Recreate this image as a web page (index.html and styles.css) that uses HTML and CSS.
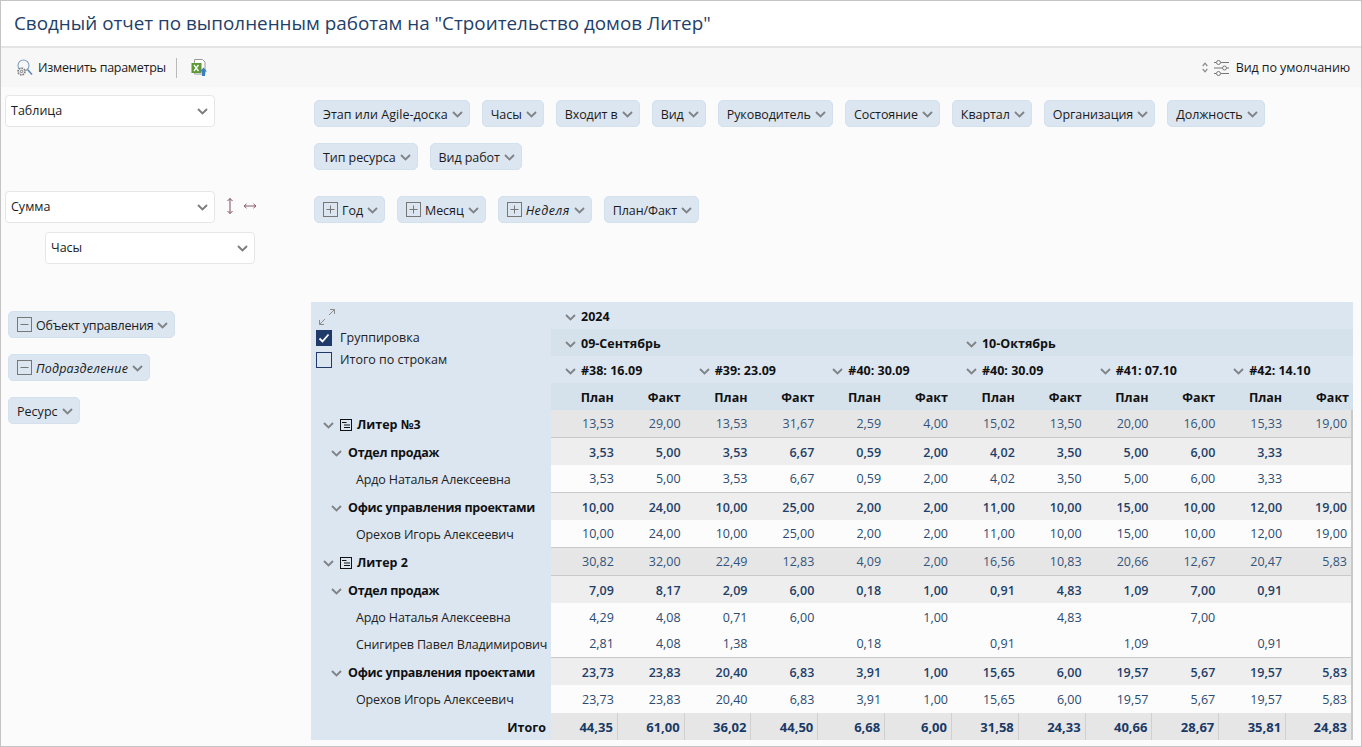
FILE: index.html
```html
<!DOCTYPE html>
<html lang="ru">
<head>
<meta charset="utf-8">
<title>Сводный отчет</title>
<link rel="stylesheet" href="styles.css">
</head>
<body>
<svg class="defs" width="0" height="0"><defs>
<symbol id="chev" viewBox="0 0 11 7"><path d="M1 1l4.500 4.500L10 1" fill="none" stroke="currentColor" stroke-width="1.900"/></symbol>
<symbol id="minus" viewBox="0 0 15 15"><rect x="0.500" y="0.500" width="14" height="14" fill="none" stroke="#777"/><path d="M3.500 7.500h8" stroke="#777"/></symbol>
<symbol id="plus" viewBox="0 0 15 15"><rect x="0.500" y="0.500" width="14" height="14" fill="none" stroke="#777"/><path d="M3.500 7.500h8M7.500 3.500v8" stroke="#777"/></symbol>
<symbol id="tree" viewBox="0 0 12 12"><g fill="none" stroke="#111"><rect x="0.500" y="0.500" width="11" height="11"/><path d="M2 3.500h4.500M4 6h6M4 8.500h6"/></g></symbol>
</defs></svg>
<div class="frame">
<header class="title"><h1>Сводный отчет по выполненным работам на "Строительство домов Литер"</h1></header>
<div class="toolbar">
  <button class="tool">
    <svg class="ico" width="18" height="18" viewBox="0 0 18 18"><circle cx="8.500" cy="6.500" r="5.500" fill="none" stroke="#7d9cc0" stroke-width="1.100"/><path d="M12.500 10.500l4.500 5" stroke="#5b86b8" stroke-width="1.500"/><circle cx="6.500" cy="12.500" r="3.400" fill="#f7f7f7" stroke="#777" stroke-width="1.700" stroke-dasharray="1.600 1"/><circle cx="6.500" cy="12.500" r="1.200" fill="none" stroke="#777"/></svg>
    <span>Изменить параметры</span>
  </button>
  <span class="sep"></span>
  <svg class="xl" width="18" height="19" viewBox="0 0 18 19"><path d="M4.500 1.500h8l2.500 2.500v12h-10.500z" fill="#fff" stroke="#999"/><rect x="1.500" y="5" width="10" height="10" fill="#5d9a35"/><path d="M4 7l4.500 6M8.500 7L4 13" stroke="#fff" stroke-width="1.300"/><path d="M13.500 9.500l3.500 4h-2v4.500h-3v-4.500h-2z" fill="#3c7fc0"/></svg>
  <div class="view">
    <svg width="6" height="11" viewBox="0 0 6 11"><path d="M.7 4L3 1.200 5.300 4M.7 7L3 9.800 5.300 7" fill="none" stroke="#888" stroke-width="1.200"/></svg>
    <svg width="15" height="16" viewBox="0 0 15 16" fill="none" stroke="#777"><path d="M0 2.500h2M7 2.500h8M0 8h8M13 8h2M0 13.500h2M7 13.500h8"/><circle cx="4.500" cy="2.500" r="2"/><circle cx="10.500" cy="8" r="2"/><circle cx="4.500" cy="13.500" r="2"/></svg>
    <span>Вид по умолчанию</span>
  </div>
</div>
<div class="main">
  <aside class="side">
    <div class="select first"><span>Таблица</span><svg class="chev sel"><use href="#chev"/></svg></div>
    <div class="sum-row">
      <div class="select"><span>Сумма</span><svg class="chev sel"><use href="#chev"/></svg></div>
      <svg class="swap" width="34" height="18" viewBox="0 0 34 18" fill="none" stroke="#7a4a63"><path d="M6 1.500v15M3.500 4L6 1.500 8.500 4M3.500 14L6 16.500 8.500 14"/><path d="M20 9h12M22.500 6.800L20 9l2.500 2.200M29.500 6.800L32 9l-2.500 2.200" stroke="#8a5a6a"/></svg>
    </div>
    <div class="select indent"><span>Часы</span><svg class="chev sel"><use href="#chev"/></svg></div>
    <div class="rows">
      <div class="pill tight"><svg class="box"><use href="#minus"/></svg>Объект управления<svg class="chev"><use href="#chev"/></svg></div>
      <div class="pill"><svg class="box"><use href="#minus"/></svg><em>Подразделение</em><svg class="chev"><use href="#chev"/></svg></div>
      <div class="pill wide">Ресурс<svg class="chev"><use href="#chev"/></svg></div>
    </div>
  </aside>
  <section class="content">
    <div class="pills">
      <div class="pill wide">Этап или Agile-доска<svg class="chev"><use href="#chev"/></svg></div>
      <div class="pill">Часы<svg class="chev"><use href="#chev"/></svg></div>
      <div class="pill">Входит в<svg class="chev"><use href="#chev"/></svg></div>
      <div class="pill">Вид<svg class="chev"><use href="#chev"/></svg></div>
      <div class="pill">Руководитель<svg class="chev"><use href="#chev"/></svg></div>
      <div class="pill">Состояние<svg class="chev"><use href="#chev"/></svg></div>
      <div class="pill">Квартал<svg class="chev"><use href="#chev"/></svg></div>
      <div class="pill">Организация<svg class="chev"><use href="#chev"/></svg></div>
      <div class="pill">Должность<svg class="chev"><use href="#chev"/></svg></div>
      <div class="pill">Тип ресурса<svg class="chev"><use href="#chev"/></svg></div>
      <div class="pill">Вид работ<svg class="chev"><use href="#chev"/></svg></div>
    </div>
    <div class="pills cols">
      <div class="pill"><svg class="box"><use href="#plus"/></svg>Год<svg class="chev"><use href="#chev"/></svg></div>
      <div class="pill"><svg class="box"><use href="#plus"/></svg>Месяц<svg class="chev"><use href="#chev"/></svg></div>
      <div class="pill"><svg class="box"><use href="#plus"/></svg><em>Неделя</em><svg class="chev"><use href="#chev"/></svg></div>
      <div class="pill">План/Факт<svg class="chev"><use href="#chev"/></svg></div>
    </div>
    <table class="pivot">
      <colgroup><col class="c0"><col span="12"></colgroup>
      <thead>
        <tr>
          <th class="corner" rowspan="4">
            <svg class="expand" width="18" height="18" viewBox="0 0 18 18" fill="none" stroke="#8a8a8a"><path d="M1.500 16.500L7 11M11 7l5.500-5.500M12 1.500h4.500V6M1.500 12v4.500H6"/></svg>
            <label class="chk"><span class="cb on"><svg width="12" height="12" viewBox="0 0 12 12"><path d="M1.500 6.500l3 3 6-7" fill="none" stroke="#fff" stroke-width="1.800"/></svg></span><span class="lbl">Группировка</span></label>
            <label class="chk"><span class="cb"></span><span class="lbl">Итого по строкам</span></label>
          </th>
          <th class="hd" colspan="12"><svg class="chev"><use href="#chev"/></svg>2024</th>
        </tr>
        <tr class="month">
          <th class="hd" colspan="6"><svg class="chev"><use href="#chev"/></svg>09-Сентябрь</th>
          <th class="hd" colspan="6"><svg class="chev"><use href="#chev"/></svg>10-Октябрь</th>
        </tr>
        <tr>
          <th class="hd" colspan="2"><svg class="chev"><use href="#chev"/></svg>#38: 16.09</th>
          <th class="hd" colspan="2"><svg class="chev"><use href="#chev"/></svg>#39: 23.09</th>
          <th class="hd" colspan="2"><svg class="chev"><use href="#chev"/></svg>#40: 30.09</th>
          <th class="hd" colspan="2"><svg class="chev"><use href="#chev"/></svg>#40: 30.09</th>
          <th class="hd" colspan="2"><svg class="chev"><use href="#chev"/></svg>#41: 07.10</th>
          <th class="hd" colspan="2"><svg class="chev"><use href="#chev"/></svg>#42: 14.10</th>
        </tr>
        <tr class="pf">
          <th>План</th><th>Факт</th><th>План</th><th>Факт</th><th>План</th><th>Факт</th><th>План</th><th>Факт</th><th>План</th><th>Факт</th><th>План</th><th>Факт</th>
        </tr>
      </thead>
      <tbody>
        <tr class="l1 tall"><th><svg class="chev"><use href="#chev"/></svg><svg class="tree"><use href="#tree"/></svg>Литер №3</th><td>13,53</td><td>29,00</td><td>13,53</td><td>31,67</td><td>2,59</td><td>4,00</td><td>15,02</td><td>13,50</td><td>20,00</td><td>16,00</td><td>15,33</td><td>19,00</td></tr>
        <tr class="l2"><th><svg class="chev"><use href="#chev"/></svg>Отдел продаж</th><td>3,53</td><td>5,00</td><td>3,53</td><td>6,67</td><td>0,59</td><td>2,00</td><td>4,02</td><td>3,50</td><td>5,00</td><td>6,00</td><td>3,33</td><td></td></tr>
        <tr class="l3 tall"><th>Ардо Наталья Алексеевна</th><td>3,53</td><td>5,00</td><td>3,53</td><td>6,67</td><td>0,59</td><td>2,00</td><td>4,02</td><td>3,50</td><td>5,00</td><td>6,00</td><td>3,33</td><td></td></tr>
        <tr class="l2"><th><svg class="chev"><use href="#chev"/></svg>Офис управления проектами</th><td>10,00</td><td>24,00</td><td>10,00</td><td>25,00</td><td>2,00</td><td>2,00</td><td>11,00</td><td>10,00</td><td>15,00</td><td>10,00</td><td>12,00</td><td>19,00</td></tr>
        <tr class="l3 tall"><th>Орехов Игорь Алексеевич</th><td>10,00</td><td>24,00</td><td>10,00</td><td>25,00</td><td>2,00</td><td>2,00</td><td>11,00</td><td>10,00</td><td>15,00</td><td>10,00</td><td>12,00</td><td>19,00</td></tr>
        <tr class="l1 tall"><th><svg class="chev"><use href="#chev"/></svg><svg class="tree"><use href="#tree"/></svg>Литер 2</th><td>30,82</td><td>32,00</td><td>22,49</td><td>12,83</td><td>4,09</td><td>2,00</td><td>16,56</td><td>10,83</td><td>20,66</td><td>12,67</td><td>20,47</td><td>5,83</td></tr>
        <tr class="l2"><th><svg class="chev"><use href="#chev"/></svg>Отдел продаж</th><td>7,09</td><td>8,17</td><td>2,09</td><td>6,00</td><td>0,18</td><td>1,00</td><td>0,91</td><td>4,83</td><td>1,09</td><td>7,00</td><td>0,91</td><td></td></tr>
        <tr class="l3"><th>Ардо Наталья Алексеевна</th><td>4,29</td><td>4,08</td><td>0,71</td><td>6,00</td><td></td><td>1,00</td><td></td><td>4,83</td><td></td><td>7,00</td><td></td><td></td></tr>
        <tr class="l3 tall"><th>Снигирев Павел Владимирович</th><td>2,81</td><td>4,08</td><td>1,38</td><td></td><td>0,18</td><td></td><td>0,91</td><td></td><td>1,09</td><td></td><td>0,91</td><td></td></tr>
        <tr class="l2"><th><svg class="chev"><use href="#chev"/></svg>Офис управления проектами</th><td>23,73</td><td>23,83</td><td>20,40</td><td>6,83</td><td>3,91</td><td>1,00</td><td>15,65</td><td>6,00</td><td>19,57</td><td>5,67</td><td>19,57</td><td>5,83</td></tr>
        <tr class="l3 tall last"><th>Орехов Игорь Алексеевич</th><td>23,73</td><td>23,83</td><td>20,40</td><td>6,83</td><td>3,91</td><td>1,00</td><td>15,65</td><td>6,00</td><td>19,57</td><td>5,67</td><td>19,57</td><td>5,83</td></tr>
        <tr class="total"><th>Итого</th><td>44,35</td><td>61,00</td><td>36,02</td><td>44,50</td><td>6,68</td><td>6,00</td><td>31,58</td><td>24,33</td><td>40,66</td><td>28,67</td><td>35,81</td><td>24,83</td></tr>
      </tbody>
    </table>
  </section>
</div>
</div>
</body>
</html>
```

FILE: styles.css
```css
* { box-sizing: border-box; }
html, body { margin: 0; height: 747px; overflow: hidden; }
body { font-family: "Open Sans", "Noto Sans", sans-serif; font-size: 12.5px; color: #1b1b1b; background: #fafafa; }
.defs { position: absolute; }
.frame { height: 747px; border: 1px solid #c4c4c4; background: #fbfbfb; overflow: hidden; }

.title { height: 47px; background: #fff; border-bottom: 2px solid #e4e4e4; padding: 9px 13px 0; }
.title h1 { margin: 0; font-size: 18.85px; font-weight: 400; color: #1f4068; line-height: 26px; white-space: nowrap; }

.toolbar { height: 39px; background: #f7f7f7; display: flex; align-items: center; padding: 0 11px 0 14px; }
.tool { display: flex; align-items: center; gap: 5px; border: 0; background: none; padding: 0; font: inherit; color: inherit; letter-spacing: -0.27px; }
.sep { width: 1px; height: 20px; background: #bbb; margin: 0 13px 0 10px; }
.view { margin-left: auto; display: flex; align-items: center; gap: 6px; letter-spacing: -0.1px; }
.view span { margin-left: 1px; }

.main { display: flex; }
.side { width: 310px; flex: none; padding: 8px 0 0 4px; }
.select { width: 210px; height: 32px; background: #fff; border: 1px solid #e6e6e6; border-radius: 4px; display: flex; align-items: center; justify-content: space-between; padding: 0 5px 2px; }
.sum-row { display: flex; align-items: center; margin-top: 64px; gap: 9px; }
.swap { margin-top: -3px; }
.indent { margin: 9px 0 0 40px; }
.rows { margin-top: 47px; padding-left: 3px; display: flex; flex-direction: column; align-items: flex-start; gap: 16px; }

.chev { width: 11px; height: 7px; color: #808487; flex: none; }
.chev.sel { width: 11px; color: #7c7c7c; margin: 2px 1px 0 0; }

.pill { height: 27px; background: #dce6f1; border: 1px solid #d3e0ee; border-radius: 5px; display: inline-flex; align-items: center; padding: 1px 6px 0 8px; gap: 4px; white-space: nowrap; letter-spacing: -0.07px; }
.pill.tight { letter-spacing: -0.22px; }
.pill.wide { letter-spacing: 0.03px; }
.pill em { letter-spacing: 0.2px; }
.pills.cols .pill em { letter-spacing: 0.45px; }
.box { width: 15px; height: 15px; flex: none; margin-top: -1px; }
.pills { display: flex; flex-wrap: wrap; gap: 16px 12px; padding-top: 13px; padding-left: 3px; max-width: 1000px; }
.pills.cols { padding-top: 26px; height: 132px; align-content: flex-start; }

.content { flex: 1; min-width: 0; }
.pivot { border-collapse: separate; border-spacing: 0; table-layout: fixed; width: 1042px; }
.pivot col { width: 66.83px; }
.pivot col.c0 { width: 240px; }
.pivot th, .pivot td { height: 27px; padding: 1px 0 0; font-weight: 400; white-space: nowrap; }
.pivot tr.tall th, .pivot tr.tall td { height: 28px; padding-top: 0; }
.corner { background: #dce6f1; vertical-align: top; text-align: left; padding: 6px 0 0 5px !important; }
.expand { display: block; margin: 0 0 1px 2px; }
.chk { display: flex; align-items: center; gap: 8px; height: 22px; color: #222; }
.lbl { margin-top: -2px; }
.cb { width: 16px; height: 16px; border: 1px solid #1f3a68; display: inline-flex; align-items: center; justify-content: center; }
.cb.on { background: #1f3a68; }

.pivot thead .hd { background: #dce6f1; text-align: left; font-weight: 700; color: #111; padding-left: 14px; }
.hd .chev { margin-right: 5px; vertical-align: 0; }
.pivot thead .month .hd { background: #d5e2ec; }
.pivot .pf th { background: #d5e2ec; text-align: right; padding-right: 4px; font-weight: 700; color: #111; }

.pivot tbody th { background: #dce6f1; text-align: left; color: #111; }
.pivot tbody td { text-align: right; padding-right: 4px; color: #2a4a70; background: #fcfcfc; }
.pivot tr.l1 th { font-weight: 700; padding-left: 12px; }
.l1 .chev { margin-right: 6px; vertical-align: 0; }
.tree { width: 12px; height: 12px; margin-right: 5px; vertical-align: -2px; }
.pivot tr.l1 td { background: #e6e6e6; border-bottom: 1px solid #c9c9c9; color: #33557c; }
.pivot tr.l2 th { font-weight: 700; padding-left: 20px; letter-spacing: -0.27px; }
.l2 .chev { margin-right: 6px; vertical-align: 0; }
.pivot tr.l2 td { background: #eee; font-weight: 600; color: #1f3f68; }
.pivot tr.l3 th { padding-left: 45px; color: #222; letter-spacing: -0.14px; }
.pivot tr.l3.tall td { border-bottom: 1px solid #c9c9c9; }
.pivot tr.l3.last td { border-bottom: 0; }
.pivot tr.total th { text-align: right; font-weight: 700; padding-right: 5px; }
.pivot tr.total td { background: #e6e6e6; font-weight: 700; font-size: 13px; color: #1a3a66; border-right: 1px solid #d0d0d0; }
.pivot tbody td:last-child { border-right: 2px solid #c9c9c9; }
```
